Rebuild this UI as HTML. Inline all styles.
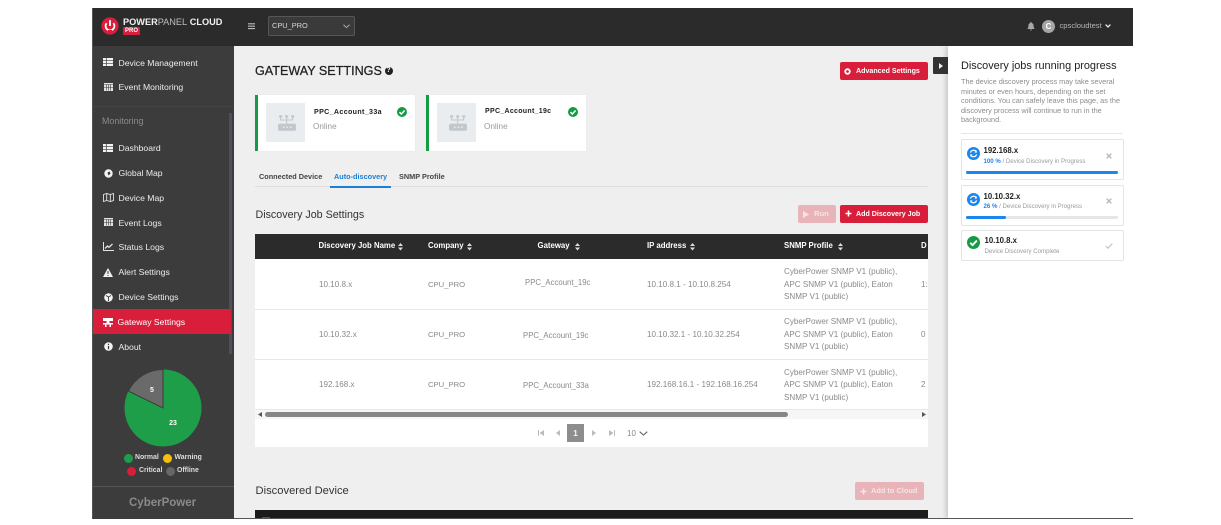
<!DOCTYPE html>
<html><head><meta charset="utf-8"><style>
html,body{margin:0;padding:0;background:#fff;width:1221px;height:525px;overflow:hidden}
body{position:relative;font-family:"Liberation Sans",sans-serif}
#p{position:absolute;left:0;top:0;width:1221px;height:525px;filter:blur(.3px)}
.a{position:absolute}
.t{position:absolute;white-space:nowrap;line-height:12px;transform:translateY(-50%)}
.nav{font-size:8.65px;color:#ececec;left:118.5px}
.th{font-size:7.8px;font-weight:bold;color:#fff;top:246px}
.td{font-size:8.1px;color:#8a8a8a}
.co{font-size:7.7px;color:#8a8a8a}
.sn{font-size:8.1px;color:#8a8a8a;line-height:12.6px;left:784px;white-space:nowrap;position:absolute}
svg{position:absolute;overflow:visible}
.btn{position:absolute;border-radius:2px;background:#d81e3a;color:#fff;font-weight:bold;font-size:7.1px;white-space:nowrap}
.pc{position:absolute;left:961px;width:163px;background:#fff;border:1px solid #e4e4e4;border-radius:2px;box-sizing:border-box}
.bar{position:absolute;left:966px;height:3px;background:#e6e6e6;border-radius:2px;width:152px}
.bar i{display:block;height:3px;background:#1a86f0;border-radius:2px}
.lg{font-size:6.9px;font-weight:bold;color:#ddd}
.tab{font-size:7.3px;font-weight:bold;color:#444;top:176.5px}
</style></head><body><div id="p">

<!-- app frame -->
<div class="a" style="left:92px;top:8px;width:1041px;height:511px;background:#efefef"></div>
<div class="a" style="left:92px;top:8px;width:1041px;height:38px;background:#2b2b2b"></div>
<div class="a" style="left:93px;top:46px;width:141px;height:473px;background:#3c3c3c"></div>
<div class="a" style="left:92px;top:8px;width:1px;height:511px;background:#555"></div>

<!-- logo -->
<svg style="left:100px;top:16px" width="20" height="20" viewBox="0 0 20 20">
<circle cx="10" cy="10" r="8.6" fill="#d81e3a"/>
<path d="M6.6 7.2a4.4 4.4 0 1 0 6.8 0" fill="none" stroke="#fff" stroke-width="1.8"/>
<path d="M10 4.2V10" stroke="#fff" stroke-width="1.8"/>
<path d="M8 14h4v4H8z" fill="#d81e3a"/>
</svg>
<div class="t" style="left:123px;top:21.5px;font-size:9.2px;color:#f2f2f2;font-weight:bold">POWER<span style="font-weight:normal;color:#bdbdbd">PANEL</span> CLOUD</div>
<div class="a" style="left:123px;top:27px;width:17px;height:8px;background:#d81e3a;border-radius:1px;color:#fff;font-size:6px;font-weight:bold;line-height:8px;text-align:center">PRO</div>

<!-- hamburger + select -->
<svg style="left:248px;top:23px" width="7" height="7"><path d="M0 .8h7M0 3.2h7M0 5.6h7" stroke="#bbb" stroke-width="1.1"/></svg>
<div class="a" style="left:268px;top:16px;width:87px;height:20px;background:#3a3a3a;border:1px solid #565656;border-radius:2px;box-sizing:border-box"></div>
<div class="t" style="left:272px;top:26px;font-size:7.4px;color:#d8d8d8">CPU_PRO</div>
<svg style="left:343px;top:24px" width="7" height="5"><path d="M.5 .8L3.5 3.6L6.5 .8" fill="none" stroke="#aaa" stroke-width="1"/></svg>

<!-- top right -->
<svg style="left:1027px;top:22px" width="8" height="9" viewBox="0 0 8 9"><path d="M4 0a1 1 0 0 1 .8 1C6.2 1.4 6.6 2.6 6.6 4c0 1.5.5 2.2 1.2 3H.2C.9 6.2 1.4 5.500 1.4 4c0-1.400.4-2.600 1.800-3A1 1 0 0 1 4 0zM3 7.500h2a1 1 0 0 1-2 0z" fill="#a8a8a8"/></svg>
<div class="a" style="left:1042px;top:19.5px;width:13px;height:13px;border-radius:50%;background:#a5a5a5;color:#fff;font-size:8px;font-weight:bold;line-height:13px;text-align:center">C</div>
<div class="t" style="left:1059.5px;top:26px;font-size:7.6px;color:#b5b5b5">cpscloudtest</div>
<svg style="left:1105px;top:24px" width="6" height="4"><path d="M.6 .6L3 3L5.4 .6" fill="none" stroke="#f0f0f0" stroke-width="1.3"/></svg>

<!-- sidebar -->
<svg width="0" height="0" style="left:0;top:0"><defs>
<g id="tbl"><path d="M0 0h10v8H0z" fill="#f2f2f2"/><path d="M3.3 0v8M0 2.7h10M0 5.3h10" stroke="#3c3c3c" stroke-width=".7"/></g>
<g id="cal"><path d="M0 0h9v8H0z" fill="#e4e4e4"/><path d="M2.3 1.5v6M4.5 1.5v6M6.7 1.5v6M0 1.5h9M0 4.5h9" stroke="#3c3c3c" stroke-width=".6"/></g>
<g id="sort"><path d="M0 3L2.5 0L5 3zM0 4.5L2.5 7.5L5 4.5z" fill="#ddd"/></g>
<g id="chk"><circle cx="5" cy="5" r="5" fill="#169b45"/><path d="M2.5 5.2L4.3 7L7.6 3.5" fill="none" stroke="#fff" stroke-width="1.500"/></g>
<g id="gw"><path d="M1 0h2.500v2H1zM6 0h2.500v2H6zM11 0h2.500v2H11z" fill="#c2c7cb"/><path d="M2.200 2v2h10V2M7.200 2v5" stroke="#c2c7cb" fill="none" stroke-width=".9"/><rect x="0" y="7" width="15" height="6" rx="1.500" fill="#c2c7cb"/><path d="M4 10h1.500M7 10h1.500M10 10h1.500" stroke="#eef0f2" stroke-width="1"/></g>
<g id="sync"><circle cx="6.500" cy="6.500" r="6.500" fill="#1a86f0"/><path d="M3.400 5.600A3.300 3.300 0 0 1 9.200 4.600M9.600 7.400A3.300 3.300 0 0 1 3.800 8.400" fill="none" stroke="#fff" stroke-width="1.200"/><path d="M9.800 3.200v2.400H7.400zM3.200 9.800V7.400h2.400z" fill="#fff"/></g>
</defs></svg>

<svg style="left:103px;top:58px" width="10" height="8"><use href="#tbl"/></svg>
<div class="t nav" style="top:62.5px">Device Management</div>
<svg style="left:103.5px;top:83px" width="9" height="8"><use href="#cal"/></svg>
<div class="t nav" style="top:87px">Event Monitoring</div>
<div class="a" style="left:93px;top:106px;width:141px;height:1px;background:#444"></div>
<div class="t" style="left:102px;top:121px;font-size:8.9px;color:#8c8c8c">Monitoring</div>
<div class="a" style="left:229px;top:113px;width:3px;height:241px;background:#4c515a"></div>

<svg style="left:103px;top:144px" width="10" height="8"><use href="#tbl"/></svg>
<div class="t nav" style="top:148px">Dashboard</div>
<svg style="left:103.5px;top:168.5px" width="9" height="9"><circle cx="4.5" cy="4.5" r="4.2" fill="#f2f2f2"/><path d="M3.5 3.5l2.200-1 .8 2.200-2 1.800z" fill="#3c3c3c"/></svg>
<div class="t nav" style="top:173px">Global Map</div>
<svg style="left:102.5px;top:193px" width="11" height="9"><path d="M.5 1.500L3.700.5l3.600 1 3.200-1v7l-3.200 1-3.600-1-3.200 1zM3.700.5v7M7.300 1.500v7" fill="none" stroke="#e4e4e4" stroke-width=".9"/></svg>
<div class="t nav" style="top:197.5px">Device Map</div>
<svg style="left:103.5px;top:218px" width="9" height="8"><use href="#cal"/></svg>
<div class="t nav" style="top:222.5px">Event Logs</div>
<svg style="left:102.5px;top:242px" width="11" height="9"><path d="M.5 0v8.500H11" fill="none" stroke="#e4e4e4" stroke-width="1"/><path d="M2 6.500L4.500 4L6 5.300L9.500 2" fill="none" stroke="#e4e4e4" stroke-width="1.300"/></svg>
<div class="t nav" style="top:247px">Status Logs</div>
<svg style="left:103px;top:267.5px" width="10" height="9"><path d="M5 0L10 9H0z" fill="#f2f2f2"/><path d="M5 3v3M5 7v1" stroke="#3c3c3c" stroke-width="1"/></svg>
<div class="t nav" style="top:272px">Alert Settings</div>
<svg style="left:103.5px;top:292.5px" width="9" height="9"><circle cx="4.500" cy="4.500" r="4.300" fill="#f2f2f2"/><path d="M2 2.500l2.500 1.500L7 2.500M4.500 4v4" fill="none" stroke="#3c3c3c" stroke-width=".9"/></svg>
<div class="t nav" style="top:297px">Device Settings</div>
<div class="a" style="left:93px;top:309px;width:138px;height:25px;background:#d81e3a"></div>
<svg style="left:103px;top:317.5px" width="10" height="9"><path d="M0 0h10v3H0zM3.500 3h3v2h-3zM0 5h10v1.500H8V9H6.500V6.500h-3V9H2V6.500H0z" fill="#fff"/></svg>
<div class="t nav" style="top:322px;left:117.5px;color:#fff">Gateway Settings</div>
<svg style="left:103.5px;top:342px" width="9" height="9"><circle cx="4.500" cy="4.500" r="4.300" fill="#f2f2f2"/><path d="M4.500 1.800v1.300M4.500 4v3.300" stroke="#3c3c3c" stroke-width="1.200"/></svg>
<div class="t nav" style="top:346.5px">About</div>

<!-- pie -->
<svg style="left:124px;top:369px" width="78" height="78" viewBox="0 0 78 78">
<circle cx="39" cy="39" r="38.500" fill="#1f9e4a"/>
<path d="M39 39V.5A38.500 38.500 0 0 0 4.400 22.100z" fill="#6a6a6a" stroke="#3c3c3c" stroke-width="1"/>
</svg>
<div class="t" style="left:147px;top:390.5px;width:10px;text-align:center;font-size:7px;font-weight:bold;color:#fff">5</div>
<div class="t" style="left:166px;top:424px;width:14px;text-align:center;font-size:7px;font-weight:bold;color:#fff">23</div>
<div class="a" style="left:124px;top:453.5px;width:9px;height:9px;border-radius:50%;background:#1f9e4a"></div>
<div class="t lg" style="left:135px;top:457.5px">Normal</div>
<div class="a" style="left:163px;top:453.5px;width:9px;height:9px;border-radius:50%;background:#f6bf0b"></div>
<div class="t lg" style="left:174.5px;top:457.5px">Warning</div>
<div class="a" style="left:127px;top:466.5px;width:9px;height:9px;border-radius:50%;background:#d81e3a"></div>
<div class="t lg" style="left:139px;top:470.5px">Critical</div>
<div class="a" style="left:165.5px;top:466.5px;width:9px;height:9px;border-radius:50%;background:#666"></div>
<div class="t lg" style="left:177px;top:470.5px">Offline</div>
<div class="a" style="left:93px;top:486px;width:141px;height:1px;background:#555"></div>
<div class="t" style="left:129px;top:503px;font-size:11.5px;font-weight:bold;color:#8a8a8a">CyberPower</div>

<!-- main header -->
<div class="t" style="left:255px;top:70.5px;font-size:12.6px;color:#222;-webkit-text-stroke:.25px #222">GATEWAY SETTINGS</div>
<div class="a" style="left:384.5px;top:67px;width:8px;height:8px;border-radius:50%;background:#222;color:#fff;font-size:7px;font-weight:bold;line-height:8px;text-align:center">?</div>
<div class="btn" style="left:840px;top:62px;width:88px;height:18px;line-height:18px;padding-left:16px;box-sizing:border-box">Advanced Settings</div>
<svg style="left:844px;top:67.5px" width="7" height="7"><circle cx="3.500" cy="3.500" r="2.300" fill="none" stroke="#fff" stroke-width="1.800"/></svg>

<!-- gateway cards -->
<div class="a" style="left:255px;top:95px;width:160px;height:56px;background:#fff;border-left:3px solid #169b45;box-sizing:border-box;box-shadow:0 0 1px #ddd"></div>
<div class="a" style="left:266px;top:103px;width:39px;height:39px;background:#e9edf0"></div>
<svg style="left:277.5px;top:115px" width="18" height="16" viewBox="0 0 15 13"><use href="#gw"/></svg>
<div class="t" style="left:314px;top:111.5px;font-size:7.1px;font-weight:bold;color:#222;letter-spacing:.35px">PPC_Account_33a</div>
<div class="t" style="left:313px;top:126.5px;font-size:8.2px;color:#9a9a9a">Online</div>
<svg style="left:397px;top:106.5px" width="10" height="10"><use href="#chk"/></svg>
<div class="a" style="left:426px;top:95px;width:160px;height:56px;background:#fff;border-left:3px solid #169b45;box-sizing:border-box;box-shadow:0 0 1px #ddd"></div>
<div class="a" style="left:437px;top:103px;width:39px;height:39px;background:#e9edf0"></div>
<svg style="left:448.5px;top:115px" width="18" height="16" viewBox="0 0 15 13"><use href="#gw"/></svg>
<div class="t" style="left:485px;top:111.5px;font-size:7px;font-weight:bold;color:#222;letter-spacing:.3px">PPC_Account_19c</div>
<div class="t" style="left:484px;top:126.5px;font-size:8.2px;color:#9a9a9a">Online</div>
<svg style="left:568px;top:106.5px" width="10" height="10"><use href="#chk"/></svg>

<!-- tabs -->
<div class="t tab" style="left:259px">Connected Device</div>
<div class="t tab" style="left:334px;color:#1a7fd6">Auto-discovery</div>
<div class="t tab" style="left:399px">SNMP Profile</div>
<div class="a" style="left:255px;top:186px;width:673px;height:1px;background:#dcdcdc"></div>
<div class="a" style="left:330px;top:186px;width:61px;height:2px;background:#1a7fd6"></div>

<!-- job section -->
<div class="t" style="left:255.5px;top:214.5px;font-size:10.7px;color:#333">Discovery Job Settings</div>
<div class="btn" style="left:798px;top:205px;width:38px;height:18px;line-height:18px;background:#e9b3ba;padding-left:16px;box-sizing:border-box;color:#f6e4e6;font-size:7.6px">Run</div>
<svg style="left:803px;top:210.5px" width="6" height="7"><path d="M0 0L6 3.500L0 7z" fill="#f6e4e6"/></svg>
<div class="btn" style="left:840px;top:205px;width:88px;height:18px;line-height:18px;padding-left:16px;box-sizing:border-box">Add Discovery Job</div>
<svg style="left:844.5px;top:210px" width="7" height="7"><path d="M3.500 .5v6M.5 3.500h6" stroke="#fff" stroke-width="1.600"/></svg>

<!-- table -->
<div class="a" style="left:255px;top:234px;width:673px;height:213px;background:#fff"></div>
<div class="a" style="left:255px;top:234px;width:673px;height:25px;background:#2b2b2b"></div>
<div class="t th" style="left:318.5px">Discovery Job Name</div><svg style="left:397.5px;top:243px" width="5" height="8"><use href="#sort"/></svg>
<div class="t th" style="left:428px">Company</div><svg style="left:467px;top:243px" width="5" height="8"><use href="#sort"/></svg>
<div class="t th" style="left:537.5px">Gateway</div><svg style="left:575px;top:243px" width="5" height="8"><use href="#sort"/></svg>
<div class="t th" style="left:647px">IP address</div><svg style="left:689.5px;top:243px" width="5" height="8"><use href="#sort"/></svg>
<div class="t th" style="left:784px">SNMP Profile</div><svg style="left:838px;top:243px" width="5" height="8"><use href="#sort"/></svg>
<div class="t th" style="left:921px;width:7px;overflow:hidden">D</div>

<div class="a" style="left:255px;top:309px;width:673px;height:1px;background:#e8e8e8"></div>
<div class="a" style="left:255px;top:359px;width:673px;height:1px;background:#e8e8e8"></div>
<div class="a" style="left:255px;top:409px;width:673px;height:1px;background:#e8e8e8"></div>

<div class="t td" style="left:319px;top:284.5px">10.10.8.x</div>
<div class="t co" style="left:428px;top:284.5px">CPU_PRO</div>
<div class="t td" style="left:525px;top:283px;font-size:7.8px">PPC_Account_19c</div>
<div class="t td" style="left:647px;top:284.5px">10.10.8.1 - 10.10.8.254</div>
<div class="sn" style="top:266px">CyberPower SNMP V1 (public),<br>APC SNMP V1 (public), Eaton<br>SNMP V1 (public)</div>
<div class="t td" style="left:921px;top:284.5px;width:7px;overflow:hidden">1:</div>

<div class="t td" style="left:319px;top:335px">10.10.32.x</div>
<div class="t co" style="left:428px;top:335px">CPU_PRO</div>
<div class="t td" style="left:523px;top:335.5px;font-size:7.8px">PPC_Account_19c</div>
<div class="t td" style="left:647px;top:335px">10.10.32.1 - 10.10.32.254</div>
<div class="sn" style="top:316px">CyberPower SNMP V1 (public),<br>APC SNMP V1 (public), Eaton<br>SNMP V1 (public)</div>
<div class="t td" style="left:921px;top:335px;width:7px;overflow:hidden">0</div>

<div class="t td" style="left:319px;top:385px">192.168.x</div>
<div class="t co" style="left:428px;top:385px">CPU_PRO</div>
<div class="t td" style="left:523px;top:385.5px;font-size:7.8px">PPC_Account_33a</div>
<div class="t td" style="left:647px;top:385px">192.168.16.1 - 192.168.16.254</div>
<div class="sn" style="top:366.5px">CyberPower SNMP V1 (public),<br>APC SNMP V1 (public), Eaton<br>SNMP V1 (public)</div>
<div class="t td" style="left:921px;top:385px;width:7px;overflow:hidden">2</div>

<!-- scrollbar -->
<div class="a" style="left:255px;top:410px;width:673px;height:9px;background:#f6f6f6"></div>
<div class="a" style="left:265px;top:412px;width:523px;height:5px;border-radius:3px;background:#868686"></div>
<svg style="left:258px;top:412px" width="4" height="5"><path d="M4 0v5L0 2.500z" fill="#555"/></svg>
<svg style="left:921.5px;top:412px" width="4" height="5"><path d="M0 0v5l4-2.500z" fill="#555"/></svg>

<!-- pagination -->
<svg style="left:538px;top:430px" width="6" height="6"><path d="M.5 0v6" stroke="#bbb"/><path d="M6 0v6L1.500 3z" fill="#bbb"/></svg>
<svg style="left:556px;top:430px" width="4" height="6"><path d="M4 0v6L0 3z" fill="#bbb"/></svg>
<div class="a" style="left:567px;top:424px;width:17px;height:18px;background:#8d8d8d;color:#f4f4f4;font-size:8.5px;font-weight:bold;line-height:18px;text-align:center">1</div>
<svg style="left:592px;top:430px" width="4" height="6"><path d="M0 0v6l4-3z" fill="#bbb"/></svg>
<svg style="left:609px;top:430px" width="6" height="6"><path d="M5.500 0v6" stroke="#bbb"/><path d="M0 0v6l4.500-3z" fill="#bbb"/></svg>
<div class="t" style="left:627px;top:433.5px;font-size:8px;color:#888">10</div>
<svg style="left:639px;top:431px" width="9" height="5"><path d="M.7 .7L4.500 4L8.300 .7" fill="none" stroke="#666" stroke-width="1.100"/></svg>

<!-- discovered -->
<div class="t" style="left:255.5px;top:491px;font-size:11.2px;color:#333">Discovered Device</div>
<div class="btn" style="left:855px;top:481.5px;width:69px;height:18px;line-height:18px;background:#e9b3ba;padding-left:16px;box-sizing:border-box;color:#f6e4e6;font-size:7.4px">Add to Cloud</div>
<svg style="left:859.5px;top:487.5px" width="7" height="7"><path d="M3.500 .5v6M.5 3.500h6" stroke="#f6e4e6" stroke-width="1.600"/></svg>
<div class="a" style="left:255px;top:510px;width:673px;height:8px;background:#1c1c1c"></div>
<div class="a" style="left:262px;top:517px;width:8px;height:1px;background:#555"></div>

<!-- right panel -->
<div class="a" style="left:948px;top:46px;width:185px;height:473px;background:#fff;box-shadow:-2px 0 5px rgba(0,0,0,.18);clip-path:inset(0 0 0 -8px)"></div>
<div class="a" style="left:234px;top:518px;width:899px;height:1px;background:#555"></div>
<div class="a" style="left:933px;top:57px;width:15px;height:17px;background:#333;border-radius:1px 0 0 1px"></div>
<svg style="left:939px;top:62.5px" width="4" height="6"><path d="M0 0v6l4-3z" fill="#eee"/></svg>
<div class="t" style="left:961px;top:66px;font-size:10.9px;color:#222">Discovery jobs running progress</div>
<div class="a" style="left:961px;top:77px;font-size:7.3px;line-height:9.6px;color:#8c8c8c;white-space:nowrap">The device discovery process may take several<br>minutes or even hours, depending on the set<br>conditions. You can safely leave this page, as the<br>discovery process will continue to run in the<br>background.</div>
<div class="a" style="left:961px;top:133px;width:162px;height:1px;background:#e8e8e8"></div>

<div class="pc" style="top:139px;height:41px"></div>
<svg style="left:966.5px;top:147px" width="13" height="13"><use href="#sync"/></svg>
<div class="t" style="left:983.5px;top:151px;font-size:7.8px;font-weight:bold;color:#222">192.168.x</div>
<div class="t" style="left:983.5px;top:161.5px;font-size:6.1px;color:#9a9a9a"><span style="color:#1a86f0;font-weight:bold">100 %</span> / Device Discovery in Progress</div>
<svg style="left:1106px;top:152.5px" width="6" height="6"><path d="M.7 .7l4.600 4.600M5.300 .7L.7 5.300" stroke="#bdbdbd" stroke-width="1.500"/></svg>
<div class="bar" style="top:171px"><i style="width:152px"></i></div>

<div class="pc" style="top:185px;height:41px"></div>
<svg style="left:966.5px;top:192.5px" width="13" height="13"><use href="#sync"/></svg>
<div class="t" style="left:983.5px;top:196.5px;font-size:7.8px;font-weight:bold;color:#222">10.10.32.x</div>
<div class="t" style="left:983.5px;top:207px;font-size:6.1px;color:#9a9a9a"><span style="color:#1a86f0;font-weight:bold">26 %</span> / Device Discovery in Progress</div>
<svg style="left:1106px;top:198px" width="6" height="6"><path d="M.7 .7l4.600 4.600M5.300 .7L.7 5.300" stroke="#bdbdbd" stroke-width="1.500"/></svg>
<div class="bar" style="top:216px"><i style="width:40px"></i></div>

<div class="pc" style="top:230px;height:31px"></div>
<svg style="left:966.5px;top:236px" width="13" height="13" viewBox="0 0 10 10"><use href="#chk"/></svg>
<div class="t" style="left:984.5px;top:241px;font-size:7.8px;font-weight:bold;color:#222">10.10.8.x</div>
<div class="t" style="left:984.5px;top:252px;font-size:6.1px;color:#9a9a9a">Device Discovery Complete</div>
<svg style="left:1105px;top:243px" width="8" height="6"><path d="M.7 3L3 5.200L7.300 .7" fill="none" stroke="#c4c4c4" stroke-width="1.200"/></svg>

</div></body></html>
